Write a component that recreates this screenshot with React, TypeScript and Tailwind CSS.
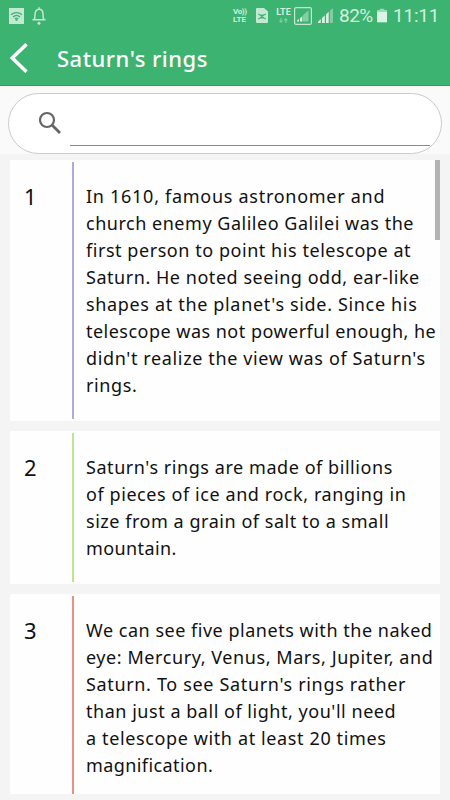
import React from 'react';

interface FactLine {
  text: string;
  tracking: string;
}

interface Fact {
  id: number;
  divider: string;
  lines: FactLine[];
}

const facts: Fact[] = [
  {
    id: 1,
    divider: 'bg-[#b5a8e0]',
    lines: [
      { text: 'In 1610, famous astronomer and', tracking: 'tracking-[0.720px]' },
      { text: 'church enemy Galileo Galilei was the', tracking: 'tracking-[0.520px]' },
      { text: 'first person to point his telescope at', tracking: 'tracking-[0.550px]' },
      { text: 'Saturn. He noted seeing odd, ear-like', tracking: 'tracking-[0.540px]' },
      { text: "shapes at the planet's side. Since his", tracking: 'tracking-[0.660px]' },
      { text: 'telescope was not powerful enough, he', tracking: 'tracking-[0.480px]' },
      { text: "didn't realize the view was of Saturn's", tracking: 'tracking-[0.630px]' },
      { text: 'rings.', tracking: 'tracking-[0.600px]' },
    ],
  },
  {
    id: 2,
    divider: 'bg-[#bbe58f]',
    lines: [
      { text: "Saturn's rings are made of billions", tracking: 'tracking-[0.560px]' },
      { text: 'of pieces of ice and rock, ranging in', tracking: 'tracking-[0.580px]' },
      { text: 'size from a grain of salt to a small', tracking: 'tracking-[0.540px]' },
      { text: 'mountain.', tracking: 'tracking-[0.400px]' },
    ],
  },
  {
    id: 3,
    divider: 'bg-[#ea8f85]',
    lines: [
      { text: 'We can see five planets with the naked', tracking: 'tracking-[0.520px]' },
      { text: 'eye: Mercury, Venus, Mars, Jupiter, and', tracking: 'tracking-[0.570px]' },
      { text: "Saturn. To see Saturn's rings rather", tracking: 'tracking-[0.660px]' },
      { text: "than just a ball of light, you'll need", tracking: 'tracking-[0.530px]' },
      { text: 'a telescope with at least 20 times', tracking: 'tracking-[0.620px]' },
      { text: 'magnification.', tracking: 'tracking-[0.420px]' },
    ],
  },
];

function StatusBar() {
  return (
    <div className="flex h-8 shrink-0 items-center pb-px pl-[9px] text-[#d3f0de]">
      <svg className="h-4 w-[15px]" viewBox="0 0 15 16">
        <rect width="15" height="16" fill="#c5e8d2" />
        <g fill="none" stroke="#3db371" strokeWidth="1.3">
          <path d="M2 6.8c3.2-3 7.8-3 11 0M4 9c2-2 5-2 7 0" />
          <path d="M5.8 10.9c1-.9 2.4-.9 3.4 0" />
        </g>
        <circle cx="7.5" cy="12" r="1.1" fill="#3db371" />
      </svg>
      <svg className="ml-2 h-[18px] w-[14px]" viewBox="0 0 14 18" fill="none" stroke="#c5e8d2" strokeWidth="1.5">
        <path d="M.5 12.800h13M2.200 12.500c.8-1.200.8-2.300.8-5C3 4.200 4.600 2.300 7 2.300s4 1.900 4 5.200c0 2.700 0 3.800.8 5M7 .3v2" />
        <circle cx="7" cy="16.300" r="1.500" fill="#c5e8d2" stroke="none" />
      </svg>

      {/* network indicators */}
      <div className="ml-[187px] w-[17px] font-['Roboto',sans-serif] font-bold">
        <div className="text-[8px] leading-[8px] tracking-[-0.400px]">Vo))</div>
        <div className="text-[8px] leading-[8px]">LTE</div>
      </div>
      <svg className="ml-[6px] h-[15px] w-3" viewBox="0 0 12 15">
        <path d="M1 0h7l4 3.500V14a1 1 0 0 1-1 1H1a1 1 0 0 1-1-1V1a1 1 0 0 1 1-1z" fill="#c5e8d2" />
        <path d="M2.200 6l1.800 1h4l1.800-1M2.200 11l1.800-1h4l1.800 1M4 7l4 3M8 7l-4 3" fill="none" stroke="#3db371" strokeWidth="1.100" />
      </svg>
      <div className="ml-[7px] flex w-[17px] flex-col items-center">
        <span className="font-['Roboto',sans-serif] text-[9px] leading-[9px] font-bold">LTE</span>
        <svg className="mt-px h-[5px] w-[9px]" viewBox="0 0 9 5" fill="none" stroke="#7fcda0" strokeWidth="1.200">
          <path d="M2 0v4M.4 2.600 2 4.200l1.600-1.600M6.800 5V1M5.200 2.400 6.800.8l1.600 1.600" />
        </svg>
      </div>
      <svg className="ml-[2px] h-[18px] w-[18px]" viewBox="0 0 18 18">
        <rect x=".6" y=".6" width="16.800" height="16.800" rx="1.500" fill="none" stroke="#c5e8d2" strokeWidth="1.200" />
        <path d="M3 14.500v-1l2-1.500v2.500zM6 14.500v-3.300l2.300-2v5.300z" fill="#e4f6eb" />
        <path d="M9 14.500V8.200l2.300-2v8.300zM11.300 14.500V6.200l3.200-3v11.300z" fill="#85cfa5" />
      </svg>
      <svg className="ml-[6px] h-[15px] w-[15px]" viewBox="0 0 15 15">
        <path d="M0 15v-1.200L2.800 11v4zM4 15V9.900l2.800-2.600V15zM8 15V6.200l2.700-2.500V15z" fill="#d8f2e2" />
        <path d="M11.800 15V2.800L15 0v15z" fill="#7fcda0" />
      </svg>
      <span className="ml-[6px] w-[36px] font-['Roboto',sans-serif] text-[19px] leading-none tracking-[-0.500px]">82%</span>
      <svg className="ml-[2px] h-[15px] w-[10px]" viewBox="0 0 11 15">
        <path d="M3 0h5v1.500h3V4H0V1.500h3z" fill="#9ad9b5" />
        <path d="M0 3.500h11V15H0z" fill="#dcf4e5" />
      </svg>
      <span className="ml-[6px] font-['Roboto',sans-serif] text-[19px] leading-none tracking-[-0.200px]">11:11</span>
    </div>
  );
}

function FactCard({ fact }: { fact: Fact }) {
  return (
    <article className="flex shrink-0 rounded-[1px] bg-[#fefefe] pt-[2px] pb-[2px]">
      <div className="w-[62px] pt-[21px] pl-[14px] text-[22px] leading-[27px]">{fact.id}</div>
      <div className={`w-[2px] ${fact.divider}`} />
      <div className="pt-[21px] pb-5 pl-3 text-[18px] leading-[27px]">
        {fact.lines.map((line) => (
          <p key={line.text} className={`whitespace-nowrap ${line.tracking}`}>{line.text}</p>
        ))}
      </div>
    </article>
  );
}

export default function App() {
  return (
    <div className="flex h-[800px] w-[450px] flex-col overflow-hidden bg-[#f4f4f4] font-['Noto_Sans',sans-serif] text-[#111]">
      <header className="flex h-[86px] shrink-0 flex-col border-b border-[#1da65a] bg-[#3db371]">
        <StatusBar />
        <div className="flex flex-1 items-center pb-[2px] pl-[10px] text-white">
          <svg className="h-[30px] w-[18px]" viewBox="0 0 18 30" fill="none" stroke="currentColor" strokeWidth="3.500">
            <path d="M16.500 1.200 2.300 15l14.200 13.800" />
          </svg>
          <h1 className="ml-[29px] text-[22px] leading-none font-medium tracking-[0.480px]">Saturn's rings</h1>
        </div>
      </header>

      <div className="h-[68px] shrink-0 bg-[#fafafa] px-2 pt-[7px]">
        <div className="flex h-[61px] overflow-hidden rounded-full border border-[#cbcbcb] bg-white">
          <svg className="mt-[17px] ml-[29px] h-6 w-6 shrink-0" viewBox="0 0 24 24" fill="none" stroke="#666" strokeWidth="2.200">
            <circle cx="9" cy="9" r="7" />
            <path d="m14 14 8 8" strokeWidth="2.800" />
          </svg>
          <input aria-label="Search" className="mr-[11px] ml-[8px] h-[52px] min-w-0 flex-1 border-b border-[#8a8a8a] outline-none" />
        </div>
      </div>

      <main className="relative mx-[10px] mt-[6px] mb-[6px] flex min-h-0 flex-1 flex-col gap-[10px] overflow-hidden">
        {facts.map((fact) => (
          <FactCard key={fact.id} fact={fact} />
        ))}
        <div className="absolute top-0 right-0 h-20 w-[5px] bg-[#b3b3b3]" />
      </main>
    </div>
  );
}
